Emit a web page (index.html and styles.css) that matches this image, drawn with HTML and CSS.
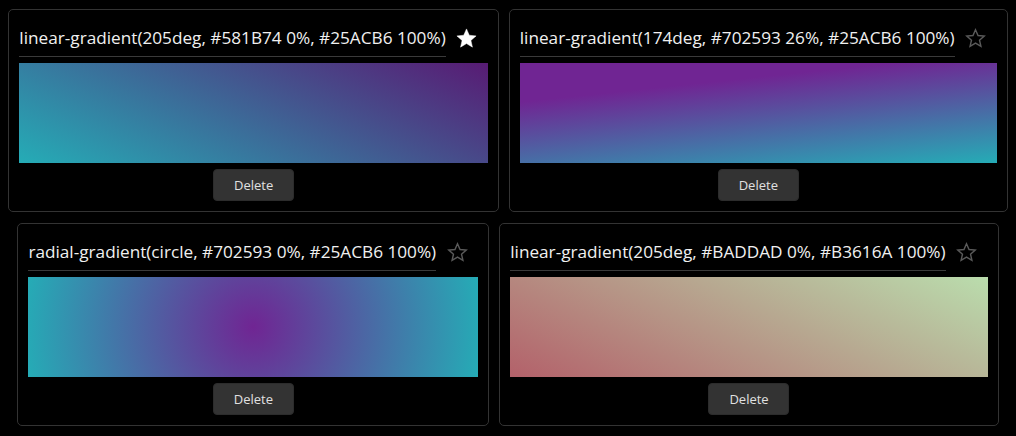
FILE: index.html
```html
<!DOCTYPE html>
<html lang="en">
<head>
<meta charset="utf-8">
<title>Gradients</title>
<link rel="stylesheet" href="styles.css">
</head>
<body>
<div class="grid">
  <div class="card">
    <div class="head">
      <span class="title">linear-gradient(205deg, #581B74 0%, #25ACB6 100%)</span>
      <span class="star on"><svg viewBox="0 0 24 24" width="23" height="23"><polygon points="12,2 14.9,8.6 22,9.3 16.6,14 18.2,21 12,17.3 5.8,21 7.4,14 2,9.3 9.1,8.6"/></svg></span>
    </div>
    <div class="swatch g1"></div>
    <button class="del">Delete</button>
  </div>
  <div class="card">
    <div class="head">
      <span class="title">linear-gradient(174deg, #702593 26%, #25ACB6 100%)</span>
      <span class="star"><svg viewBox="0 0 24 24" width="21" height="21"><polygon points="12,2 14.9,8.6 22,9.3 16.6,14 18.2,21 12,17.3 5.8,21 7.4,14 2,9.3 9.1,8.6"/></svg></span>
    </div>
    <div class="swatch g2"></div>
    <button class="del">Delete</button>
  </div>
  <div class="card">
    <div class="head">
      <span class="title">radial-gradient(circle, #702593 0%, #25ACB6 100%)</span>
      <span class="star"><svg viewBox="0 0 24 24" width="21" height="21"><polygon points="12,2 14.9,8.6 22,9.3 16.6,14 18.2,21 12,17.3 5.8,21 7.4,14 2,9.3 9.1,8.6"/></svg></span>
    </div>
    <div class="swatch g3"></div>
    <button class="del">Delete</button>
  </div>
  <div class="card">
    <div class="head">
      <span class="title">linear-gradient(205deg, #BADDAD 0%, #B3616A 100%)</span>
      <span class="star"><svg viewBox="0 0 24 24" width="21" height="21"><polygon points="12,2 14.9,8.6 22,9.3 16.6,14 18.2,21 12,17.3 5.8,21 7.4,14 2,9.3 9.1,8.6"/></svg></span>
    </div>
    <div class="swatch g4"></div>
    <button class="del">Delete</button>
  </div>
</div>
</body>
</html>
```
FILE: styles.css
```css
html, body {
  margin: 0;
  background: #000;
}
body {
  font-family: "Open Sans", "Noto Sans", sans-serif;
  color: #f0f0f0;
}
.grid {
  display: flex;
  flex-wrap: wrap;
  justify-content: center;
  gap: 11px 10px;
  padding: 9px 0;
}
.card {
  border: 1px solid #333;
  border-radius: 5px;
  padding: 10px;
  display: flex;
  flex-direction: column;
  align-items: center;
  gap: 6px;
}
.head {
  display: flex;
  align-items: center;
  align-self: stretch;
}
.title {
  font-size: 17.2px;
  line-height: 36px;
  border-bottom: 1px solid #3a3a3a;
  white-space: nowrap;
}
.star {
  display: flex;
  align-items: center;
  justify-content: center;
  width: 20px;
  margin: 0 11px 0 11px;
  padding-bottom: 1px;
}
.star svg {
  flex: none;
}
.star svg polygon {
  fill: none;
  stroke: #5a5a5a;
  stroke-width: 1.6;
  stroke-linejoin: miter;
}
.star.on svg polygon {
  fill: #fff;
  stroke: #fff;
  stroke-width: 0.5;
}
.swatch {
  align-self: stretch;
  height: 100px;
}
.g1 { background: linear-gradient(205deg, #581B74 0%, #25ACB6 100%); }
.g2 { background: linear-gradient(174deg, #702593 26%, #25ACB6 100%); }
.g3 { background: radial-gradient(circle, #702593 0%, #25ACB6 100%); }
.g4 { background: linear-gradient(205deg, #BADDAD 0%, #B3616A 100%); }
.del {
  font-family: "Open Sans", "Noto Sans", sans-serif;
  font-size: 13px;
  line-height: 16px;
  color: #e0e0e0;
  background: #333;
  border: 1px solid #2c2c2c;
  border-radius: 4px;
  padding: 7px 20px;
  height: 32px;
  width: 81px;
}
```
